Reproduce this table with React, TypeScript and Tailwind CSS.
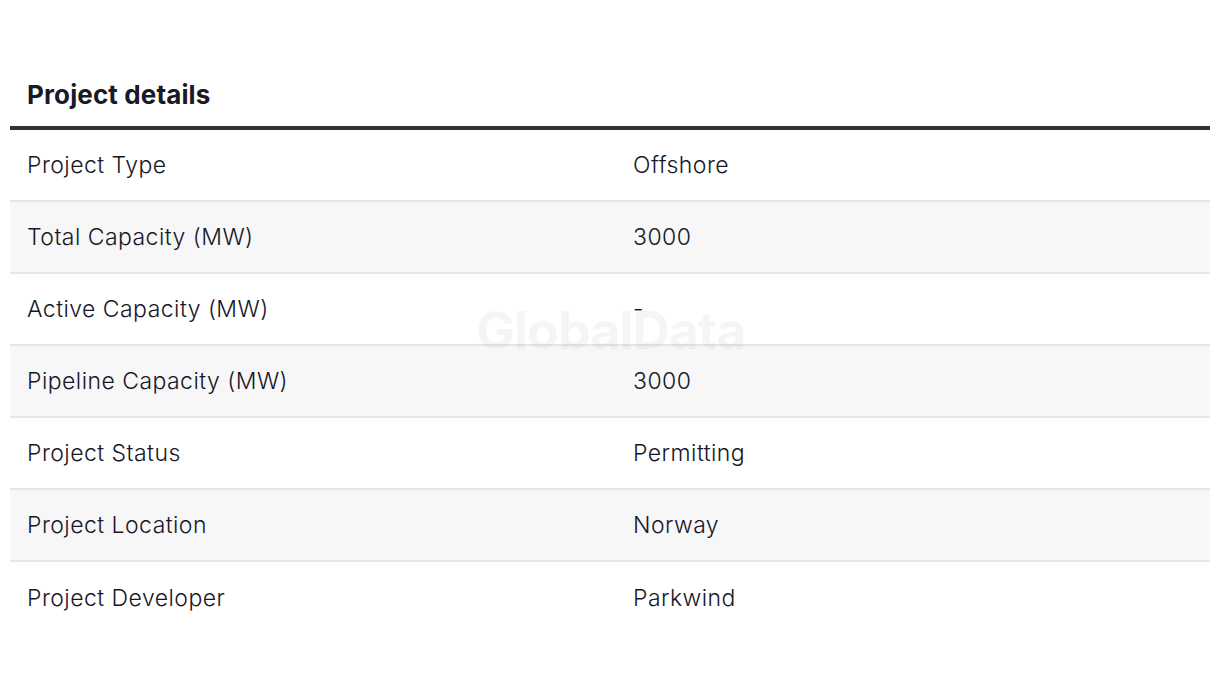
const rows: [string, string][] = [
  ["Project Type", "Offshore"],
  ["Total Capacity (MW)", "3000"],
  ["Active Capacity (MW)", "-"],
  ["Pipeline Capacity (MW)", "3000"],
  ["Project Status", "Permitting"],
  ["Project Location", "Norway"],
  ["Project Developer", "Parkwind"],
];

export default function App() {
  return (
    <div className="min-h-[674px] w-[1220px] bg-white px-[10px] pt-[76px] font-['Inter','Liberation_Sans',sans-serif] text-[#171728]">
      <h2 className="px-[17px] text-[26px] font-bold leading-[38px] tracking-[0.005em] text-[#191927]">Project details</h2>
      <div className="relative mt-[12px] border-t-4 border-[#333333]">
        <div aria-hidden="true" className="pointer-events-none absolute left-[466px] top-[175px] z-0 text-[52px] font-bold leading-none tracking-[-0.02em] text-[#000000]/[0.04]">
          GlobalData
        </div>
        {rows.map(([label, value], i) => (
          <div
            key={label}
            className={`grid h-[72px] grid-cols-[607px_1fr] items-center text-[23px] font-light tracking-[0.02em] ${i % 2 === 1 ? "bg-[#f7f7f7]" : "bg-transparent"} ${i < rows.length - 1 ? "border-b-2 border-[#e6e6e6]" : ""}`}
          >
            <span className="relative pl-[17px]">{label}</span>
            <span className="relative pl-[16px]">{value}</span>
          </div>
        ))}
      </div>
    </div>
  );
}
